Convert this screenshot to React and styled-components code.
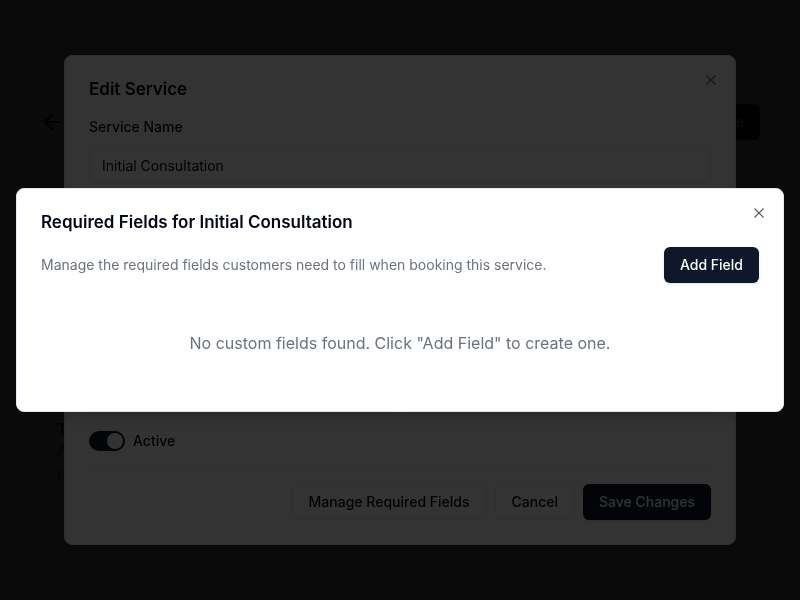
import React from "react";
import styled, { createGlobalStyle, css } from "styled-components";
import { ArrowLeft } from "lucide-react";

const GlobalStyle = createGlobalStyle`
  *, *::before, *::after { box-sizing: border-box; }
  body {
    margin: 0;
    background: #f9fafb;
    color: #020817;
    font-family: Inter, "Liberation Sans", sans-serif;
    font-size: 16px;
    line-height: 24px;
    -webkit-font-smoothing: antialiased;
  }
  h1, h2, h3, p { margin: 0; }
  button, input, textarea { font: inherit; color: inherit; }
`;

const Page = styled.main`
  display: flex;
  flex-direction: column;
  gap: 32px;
  min-height: 100vh;
  padding: 104px 40px 40px;
`;

const PageHeader = styled.header`
  display: flex;
  align-items: center;
  justify-content: space-between;
`;

const BackButton = styled.button`
  display: flex;
  padding: 0;
  border: 0;
  background: none;
`;

const ServiceCard = styled.section`
  display: flex;
  flex-direction: column;
  justify-content: flex-end;
  min-height: 330px;
  padding: 16px;
  border: 1px solid #e2e8f0;
  border-radius: 12px;
  background: #ffffff;
`;

const ServiceName = styled.h3`
  font-size: 16px;
  font-weight: 600;
`;

const ServiceMeta = styled.p`
  font-size: 14px;
  line-height: 20px;
  color: #6b7280;
  & + & { margin-top: 4px; }
`;

const Overlay = styled.div`
  position: fixed;
  inset: 0;
  background: rgba(0, 0, 0, 0.8);
`;

const Dialog = styled.section`
  position: absolute;
  top: 50%;
  left: 50%;
  transform: translate(-50%, -50%);
  display: flex;
  flex-direction: column;
  gap: 16px;
  width: calc(100% - 32px);
  max-width: ${({ $wide }) => ($wide ? "896px" : "672px")};
  padding: 24px;
  border: 1px solid #e2e8f0;
  border-radius: 8px;
  background: #ffffff;
  box-shadow: 0 10px 15px -3px rgba(0, 0, 0, 0.1), 0 4px 6px -4px rgba(0, 0, 0, 0.1);
`;

const DialogTitle = styled.h2`
  font-size: 17px;
  font-weight: 600;
  line-height: 18px;
`;

const CloseButton = styled.button`
  position: absolute;
  top: 16px;
  right: 16px;
  display: flex;
  padding: 0;
  border: 0;
  background: none;
  opacity: 0.7;
`;

const Button = styled.button`
  height: 36px;
  padding: 0 16px;
  border: 1px solid #e2e8f0;
  border-radius: 6px;
  background: #ffffff;
  font-size: 14px;
  font-weight: 500;
  line-height: 20px;
  white-space: nowrap;
  box-shadow: 0 1px 2px rgba(0, 0, 0, 0.05);
  ${({ $primary }) =>
    $primary &&
    css`
      border: 0;
      background: #0f172a;
      color: #f8fafc;
      box-shadow: 0 1px 3px rgba(0, 0, 0, 0.1), 0 1px 2px -1px rgba(0, 0, 0, 0.1);
    `}
`;

const Form = styled.form`
  display: flex;
  flex-direction: column;
  gap: 16px;
`;

const Label = styled.label`
  font-size: 14px;
  font-weight: 500;
`;

const inputStyle = css`
  display: block;
  width: 100%;
  border: 1px solid #e2e8f0;
  border-radius: 6px;
  background: transparent;
  font-size: 14px;
  line-height: 20px;
  box-shadow: 0 1px 2px rgba(0, 0, 0, 0.05);
`;

const TextInput = styled.input`
  ${inputStyle}
  height: 36px;
  padding: 0 12px;
`;

const Field = styled.div`
  ${TextInput} { margin-top: 8px; }
`;

const FieldPair = styled.div`
  display: grid;
  grid-template-columns: 1fr 1fr;
  gap: 16px;
  padding-top: 32px;
`;

const TextArea = styled.textarea`
  ${inputStyle}
  height: 132px;
  padding: 8px 12px;
  resize: none;
`;

const SwitchRow = styled.div`
  display: flex;
  align-items: center;
  gap: 8px;
  height: 20px;
`;

const Switch = styled.input`
  appearance: none;
  display: flex;
  width: 36px;
  height: 20px;
  margin: 0;
  padding: 2px;
  border-radius: 10px;
  background: #e2e8f0;
  &::before {
    content: "";
    width: 16px;
    height: 16px;
    border-radius: 50%;
    background: #ffffff;
    box-shadow: 0 10px 15px -3px rgba(0, 0, 0, 0.1), 0 4px 6px -4px rgba(0, 0, 0, 0.1);
  }
  &:checked {
    justify-content: flex-end;
    background: #0f172a;
  }
`;

const Actions = styled.footer`
  display: flex;
  justify-content: flex-end;
  gap: 8px;
  padding-top: 16px;
  border-top: 1px solid #e2e8f0;
`;

const IntroRow = styled.div`
  display: flex;
  align-items: center;
  justify-content: space-between;
  gap: 16px;
`;

const Description = styled.p`
  font-size: 14px;
  line-height: 20px;
  color: #6b7280;
`;

const EmptyMessage = styled.p`
  padding: 32px 0;
  text-align: center;
  color: #6b7280;
`;

function CloseControl() {
  return (
    <CloseButton type="button" aria-label="Close">
      <svg width="16" height="16" viewBox="0 0 15 15" fill="currentColor" aria-hidden="true">
        <path d="M11.7816 4.03157C12.0062 3.80702 12.0062 3.44295 11.7816 3.2184C11.5571 2.99385 11.193 2.99385 10.9685 3.2184L7.50005 6.68682L4.03164 3.2184C3.80708 2.99385 3.44301 2.99385 3.21846 3.2184C2.99391 3.44295 2.99391 3.80702 3.21846 4.03157L6.68688 7.49999L3.21846 10.9684C2.99391 11.193 2.99391 11.557 3.21846 11.7816C3.44301 12.0061 3.80708 12.0061 4.03164 11.7816L7.50005 8.31316L10.9685 11.7816C11.193 12.0061 11.5571 12.0061 11.7816 11.7816C12.0062 11.557 12.0062 11.193 11.7816 10.9684L8.31322 7.49999L11.7816 4.03157Z" />
      </svg>
    </CloseButton>
  );
}

export default function App() {
  return (
    <>
      <GlobalStyle />
      <Page>
        <PageHeader>
          <BackButton type="button" aria-label="Back">
            <ArrowLeft size={24} />
          </BackButton>
          <Button type="button" $primary>Add Service</Button>
        </PageHeader>
        <ServiceCard>
          <ServiceName>Test</ServiceName>
          <ServiceMeta>A test</ServiceMeta>
          <ServiceMeta>60 min</ServiceMeta>
        </ServiceCard>
      </Page>

      <Overlay>
        <Dialog role="dialog" aria-labelledby="edit-title">
          <DialogTitle id="edit-title">Edit Service</DialogTitle>
          <Form>
            <Field>
              <Label htmlFor="name">Service Name</Label>
              <TextInput id="name" defaultValue="Initial Consultation" />
            </Field>
            <TextArea aria-label="Description" />
            <FieldPair>
              <TextInput aria-label="Duration" />
              <TextInput aria-label="Price" />
            </FieldPair>
            <SwitchRow>
              <Switch id="active" type="checkbox" role="switch" defaultChecked />
              <Label htmlFor="active">Active</Label>
            </SwitchRow>
            <Actions>
              <Button type="button">Manage Required Fields</Button>
              <Button type="button">Cancel</Button>
              <Button type="button" $primary>Save Changes</Button>
            </Actions>
          </Form>
          <CloseControl />
        </Dialog>
      </Overlay>

      <Overlay>
        <Dialog $wide role="dialog" aria-modal="true" aria-labelledby="fields-title">
          <DialogTitle id="fields-title">Required Fields for Initial Consultation</DialogTitle>
          <IntroRow>
            <Description>
              Manage the required fields customers need to fill when booking this service.
            </Description>
            <Button type="button" $primary>Add Field</Button>
          </IntroRow>
          <EmptyMessage>No custom fields found. Click "Add Field" to create one.</EmptyMessage>
          <CloseControl />
        </Dialog>
      </Overlay>
    </>
  );
}
